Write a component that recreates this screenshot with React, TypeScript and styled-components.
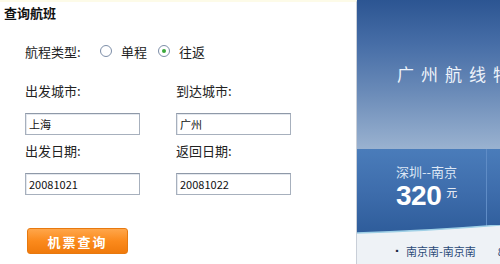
import React from "react";
import styled, { createGlobalStyle } from "styled-components";

const GlobalStyle = createGlobalStyle`
  html, body {
    margin: 0;
    padding: 0;
    background: #ffffff;
  }
  body {
    font-family: "Noto Sans CJK SC", "DejaVu Sans", sans-serif;
  }
`;

const Page = styled.div`
  width: 500px;
  height: 264px;
  display: flex;
  overflow: hidden;
`;

const SearchPanel = styled.div`
  width: 356px;
  flex-shrink: 0;
  border-right: 1px solid #c9cfd8;
  border-top: 2px solid #fdfbe8;
  background: #ffffff;
  display: flex;
  flex-direction: column;
`;

const Title = styled.h3`
  margin: 0;
  padding: 2px 0 0 4px;
  height: 20px;
  font-size: 13px;
  line-height: 18px;
  font-weight: 700;
  color: #111;
`;

const Form = styled.div`
  padding-left: 25px;
  display: flex;
  flex-direction: column;
`;

const TypeRow = styled.div`
  margin-top: 17px;
  height: 20px;
  display: flex;
  align-items: center;
  font-size: 13px;
  color: #222;
`;

const TypeLabel = styled.span`
  width: 75px;
`;

const RadioOption = styled.label`
  display: flex;
  align-items: center;
  gap: 9px;
  margin-right: 11px;
`;

const RadioDot = styled.span<{ $checked?: boolean }>`
  width: 10px;
  height: 10px;
  border-radius: 50%;
  border: 1px solid #7d8ea8;
  background: #ffffff;
  display: flex;
  align-items: center;
  justify-content: center;
  &::after {
    content: "";
    width: 4px;
    height: 4px;
    border-radius: 50%;
    background: ${(p) => (p.$checked ? "#3aa83a" : "transparent")};
  }
`;

const Fields = styled.div`
  margin-top: 20px;
  display: grid;
  grid-template-columns: 151px 151px;
  row-gap: 6px;
`;

const Field = styled.div`
  display: flex;
  flex-direction: column;
  gap: 12px;
`;

const Label = styled.div`
  height: 20px;
  line-height: 20px;
  font-size: 13px;
  color: #222;
`;

const TextBox = styled.div`
  width: 110px;
  height: 20px;
  border: 1px solid #a7b0bd;
  border-top-color: #8f99a8;
  box-shadow: inset 1px 1px 0 #e4e8ee;
  padding: 0 0 0 3px;
  font-size: 11px;
  line-height: 20px;
  color: #111;
  font-family: "Noto Sans CJK SC", "DejaVu Sans", sans-serif;
`;

const SearchButton = styled.button`
  margin: 33px 0 0 2px;
  width: 101px;
  height: 26px;
  border: 1px solid #e7790f;
  border-radius: 3px;
  background: linear-gradient(#ffa64a 0%, #fb8a1c 50%, #f07a0c 100%);
  color: #ffffff;
  font-family: "Noto Sans CJK SC", sans-serif;
  font-size: 13px;
  font-weight: 700;
  letter-spacing: 2px;
  padding: 0;
  cursor: pointer;
`;

const PromoPanel = styled.div`
  flex: 1;
  display: flex;
  flex-direction: column;
  overflow: hidden;
`;

const Banner = styled.div`
  height: 149px;
  flex-shrink: 0;
  background: linear-gradient(#2c5592 0%, #476ea7 30%, #6889b7 60%, #9ab2d0 100%);
  display: flex;
  align-items: center;
  padding-left: 40px;
  padding-bottom: 2px;
  box-sizing: border-box;
`;

const BannerTitle = styled.div`
  font-size: 17px;
  letter-spacing: 7px;
  color: #eef3fa;
  white-space: nowrap;
`;

const PriceStrip = styled.div`
  position: relative;
  height: 90px;
  flex-shrink: 0;
  display: flex;
  background: linear-gradient(#4a7cba 0%, #3d6cab 50%, #2c5a98 100%);
`;

const PriceCard = styled.div`
  width: 130px;
  flex-shrink: 0;
  border-right: 1px solid #5f8cc6;
  padding: 14px 0 0 39px;
  box-sizing: border-box;
  height: 80px;
`;

const Route = styled.div`
  font-size: 13px;
  line-height: 18px;
  color: #dce7f5;
`;

const Price = styled.div`
  display: flex;
  align-items: flex-start;
  color: #ffffff;
`;

const Amount = styled.span`
  font-family: "Liberation Sans", Arial, sans-serif;
  font-size: 28px;
  line-height: 30px;
  font-weight: 700;
  letter-spacing: -0.5px;
`;

const Unit = styled.span`
  font-size: 11px;
  margin: 3px 0 0 5px;
`;

const Wave = styled.svg`
  position: absolute;
  left: 0;
  bottom: 0;
  width: 100%;
  height: 14px;
`;

const NewsBand = styled.div`
  flex: 1;
  background: #eef2f6;
  display: flex;
  align-items: center;
  padding: 0 0 1px 36px;
  gap: 22px;
  font-size: 11px;
  color: #2b4a78;
  white-space: nowrap;
`;

const NewsItem = styled.span`
  &::before {
    content: "▪";
    font-size: 8px;
    margin-right: 5px;
    color: #1a2a44;
    vertical-align: 2px;
  }
`;

export default function App() {
  return (
    <>
      <GlobalStyle />
      <Page>
        <SearchPanel>
          <Title>查询航班</Title>
          <Form>
            <TypeRow>
              <TypeLabel>航程类型:</TypeLabel>
              <RadioOption>
                <RadioDot />
                单程
              </RadioOption>
              <RadioOption>
                <RadioDot $checked />
                往返
              </RadioOption>
            </TypeRow>
            <Fields>
              <Field>
                <Label>出发城市:</Label>
                <TextBox>上海</TextBox>
              </Field>
              <Field>
                <Label>到达城市:</Label>
                <TextBox>广州</TextBox>
              </Field>
              <Field>
                <Label>出发日期:</Label>
                <TextBox>20081021</TextBox>
              </Field>
              <Field>
                <Label>返回日期:</Label>
                <TextBox>20081022</TextBox>
              </Field>
            </Fields>
            <div>
              <SearchButton>机票查询</SearchButton>
            </div>
          </Form>
        </SearchPanel>
        <PromoPanel>
          <Banner>
            <BannerTitle>广州航线特价</BannerTitle>
          </Banner>
          <PriceStrip>
            <PriceCard>
              <Route>深圳--南京</Route>
              <Price>
                <Amount>320</Amount>
                <Unit>元</Unit>
              </Price>
            </PriceCard>
            <Wave viewBox="0 0 143 14" preserveAspectRatio="none">
              <path d="M0 8 Q70 6 143 0 L143 14 L0 14 Z" fill="#eef2f6" />
              <path d="M0 8 Q70 6 143 0" stroke="#9fd0e6" strokeWidth="1.5" fill="none" />
            </Wave>
          </PriceStrip>
          <NewsBand>
            <NewsItem>南京南-南京南</NewsItem>
            <span>8月</span>
          </NewsBand>
        </PromoPanel>
      </Page>
    </>
  );
}
